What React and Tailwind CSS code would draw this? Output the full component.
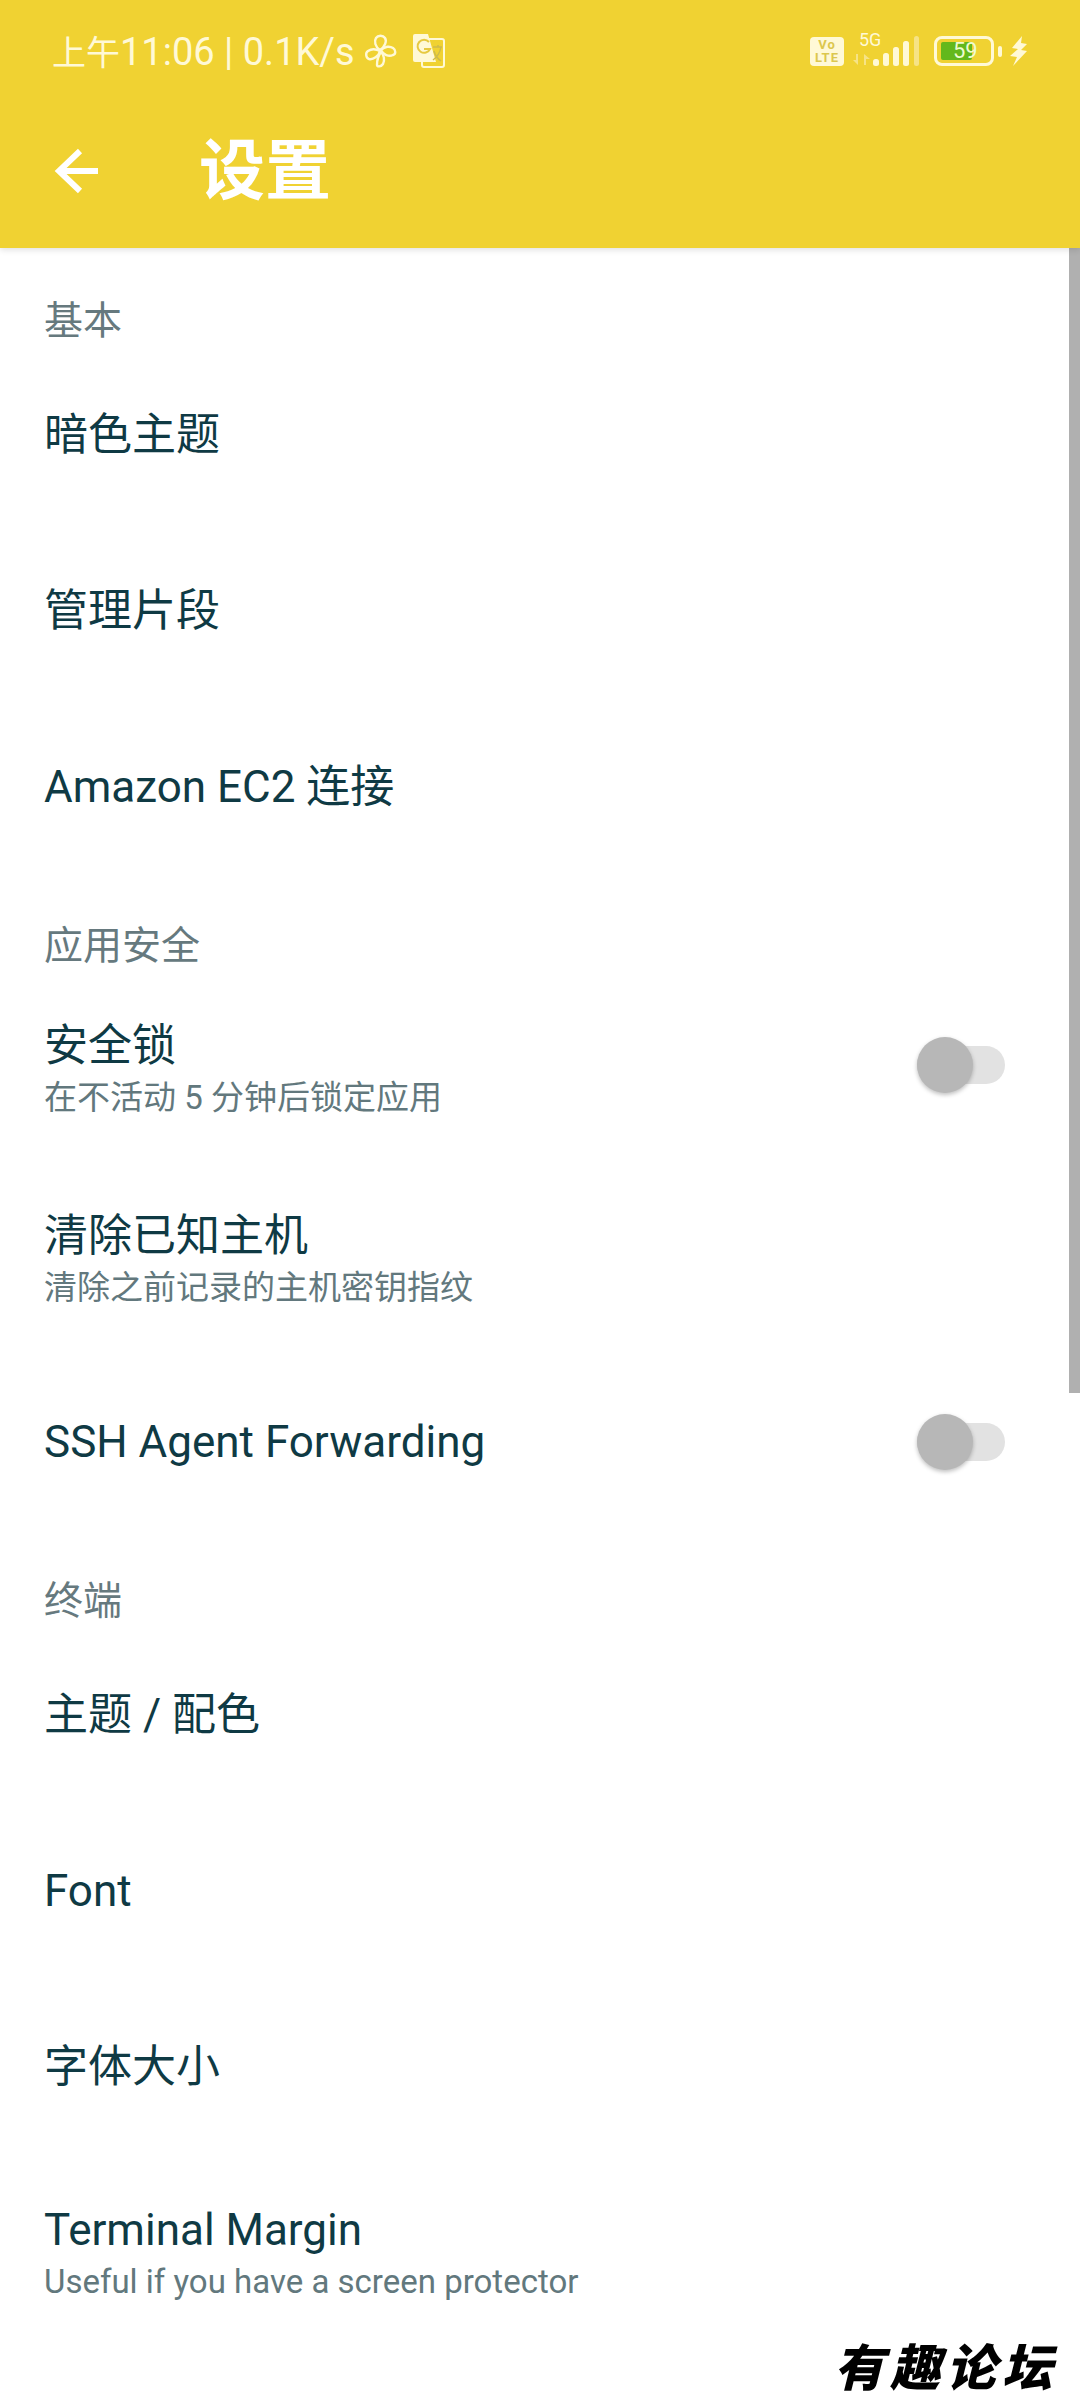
import React from 'react';

const cjk = "font-['Roboto','Noto_Sans_CJK_SC',sans-serif]";

const FanIcon = () => (
  <svg width="33" height="34" viewBox="0 0 33 34" fill="none" stroke="#fff9d6" strokeWidth="2.4" strokeLinejoin="round" className="ml-[9px]">
    <path d="M16 16C11 13 10 7 12 4c2-3 7-3 9 0 2 3 0 9-5 12z" />
    <path d="M17 16c4-4 9-4 12-2 3 2 3 6 0 7-4 2-10 0-12-5z" />
    <path d="M16 17c-4-2-9-2-12 0-3 2-2 7 1 8 4 1 10-3 11-8z" />
    <path d="M17 18c3 3 4 8 2 12-2 3-6 3-6 1 0-4 1-9 4-13z" />
  </svg>
);

const TranslateIcon = () => (
  <svg width="32" height="34" viewBox="0 0 32 34" className="ml-[16px]">
    <rect x="9" y="5" width="22" height="28" rx="2" fill="none" stroke="#fff9d6" strokeWidth="2" />
    <path d="M2 0h13l8 28H2a2 2 0 0 1-2-2V2a2 2 0 0 1 2-2z" fill="#fff9d6" />
    <path d="M16 8a6.5 6.5 0 1 0 1 7h-6" fill="none" stroke="#e6c940" strokeWidth="2" />
    <path d="M20 13h9M25 11v2M28 13c-1 6-4 10-8 13M21 17c1 4 4 8 7 10" fill="none" stroke="#cdbb4c" strokeWidth="1.5" />
  </svg>
);

// arrows plus the five signal bars, the last one pale
const SignalIcon = () => (
  <svg width="66" height="30" viewBox="0 0 66 30" className="block">
    <path d="M5 18v11L0 24h3v-6zM11 29V18l6 5h-4v6z" fill="#f6e386" />
    <rect x="20" y="23" width="6" height="7" rx="2.5" fill="#fff9d6" />
    <rect x="30" y="17" width="6" height="13" rx="2.5" fill="#fff9d6" />
    <rect x="40" y="11" width="6" height="19" rx="2.5" fill="#fff9d6" />
    <rect x="50" y="5" width="6" height="25" rx="2.5" fill="#fff9d6" />
    <rect x="61" y="0" width="5" height="30" rx="2.5" fill="#f6e386" />
  </svg>
);

const StatusBar = () => (
  <div className="flex h-[100px] items-center justify-between pl-[52px] pr-[53px] pt-[2px]">
    <div className={`flex items-center text-[38px] leading-[40px] text-[#fff9d6] ${cjk}`}>
      <span className="mt-[2px] whitespace-pre">
        <span className="text-[34px]">上午</span>11:06 | 0.1K/s
      </span>
      <FanIcon />
      <TranslateIcon />
    </div>
    <div className="flex items-center">
      <div className="flex h-[29px] w-[34px] flex-col items-center justify-center rounded-[4px] bg-[#fff9d6] font-['Roboto',sans-serif] text-[13px] font-bold leading-[13px] tracking-[1px] text-[#dcc74e]">
        <span>Vo</span>
        <span>LTE</span>
      </div>
      <div className="relative ml-[9px] w-[66px]">
        <span className="absolute -top-[5px] left-[6px] font-['Roboto',sans-serif] text-[18px] leading-[18px] text-[#fff9d6]">5G</span>
        <SignalIcon />
      </div>
      <div className="relative ml-[15px] flex h-[30px] w-[60px] items-center rounded-[8px] border-[3px] border-[#fff9d6] pl-[4px]">
        <div className="h-[18px] w-[31px] rounded-[2px] bg-[#63b81c]"></div>
        <span className="absolute left-[16px] font-['Roboto',sans-serif] text-[22px] leading-[24px] text-[#eefbd0]">59</span>
      </div>
      <div className="ml-[4px] h-[11px] w-[4px] rounded-[2px] bg-[#fff9d6]"></div>
      <svg width="17" height="30" viewBox="0 0 17 30" className="ml-[8px]">
        <path d="M12 0 2 12l6 1-8 7 7 1-4 9 14-15-6-1 6-6-6-1z" fill="#fff9d6" />
      </svg>
    </div>
  </div>
);

const Header = () => (
  <header className="relative z-10 h-[248px] bg-[#f0d232] shadow-[0_2px_6px_rgba(0,0,0,0.12)]">
    <StatusBar />
    <div className="flex h-[140px] items-center pl-[54px]">
      <svg width="44" height="46" viewBox="0 0 44 46" fill="none" stroke="#ffffff" strokeWidth="6" className="mt-[2px]">
        <path d="M44 23H6M26 3 5 23l21 20" />
      </svg>
      <h1 className={`ml-[101px] mt-[4px] text-[66px] font-bold leading-[80px] text-white ${cjk}`}>设置</h1>
    </div>
  </header>
);

const SectionTitle = ({ text, height, pad }) => (
  <div className={`flex items-end pl-[44px] text-[39px] leading-[50px] text-[#66797e] ${height} ${pad} ${cjk}`}>
    {text}
  </div>
);

const Toggle = ({ offset }) => (
  <div className={`relative mr-[75px] h-[38px] w-[88px] rounded-full bg-[#e2e2e2] ${offset}`}>
    <div className="absolute -top-[9px] left-0 h-[56px] w-[56px] rounded-full bg-[#b7b7b7] shadow-[0_2px_4px_rgba(0,0,0,0.25)]"></div>
  </div>
);

const Row = ({ title, sub, toggle, offset = '', height = 'h-[176px]' }) => (
  <div className={`flex items-center justify-between pl-[44px] ${height} ${cjk}`}>
    <div className="flex flex-col">
      <span className="text-[44px] leading-[56px] text-[#0f3a44]">{title}</span>
      {sub && <span className="text-[33px] leading-[48px] text-[#62787d]">{sub}</span>}
    </div>
    {toggle && <Toggle offset={offset} />}
  </div>
);

export default function App() {
  return (
    <div className="relative h-[2400px] w-[1080px] overflow-hidden bg-white">
      <Header />

      <div className="absolute right-0 top-[248px] h-[1145px] w-[11px] bg-[#b0b0b0]"></div>

      <main>
        <SectionTitle text="基本" height="h-[99px]" pad="pb-[1px]" />
        <Row title="暗色主题" />
        <Row title="管理片段" />
        <Row title="Amazon EC2 连接" />

        <SectionTitle text="应用安全" height="h-[100px]" pad="pb-[4px]" />
        <Row title="安全锁" sub="在不活动 5 分钟后锁定应用" toggle offset="-mt-[10px]" height="h-[190px]" />
        <Row title="清除已知主机" sub="清除之前记录的主机密钥指纹" height="h-[189px]" />
        <Row title="SSH Agent Forwarding" toggle height="h-[176px]" />

        <SectionTitle text="终端" height="h-[97px]" pad="pb-[1px]" />
        <Row title="主题 / 配色" />
        <Row title="Font" />
        <Row title="字体大小" />
        <Row title="Terminal Margin" sub="Useful if you have a screen protector" height="h-[198px]" />
      </main>

      {/* watermark */}
      <div className="absolute bottom-[6px] right-[22px] font-['Noto_Sans_CJK_SC',sans-serif] text-[50px] font-black italic leading-[60px] tracking-[6px] text-black">
        有趣论坛
      </div>
    </div>
  );
}
